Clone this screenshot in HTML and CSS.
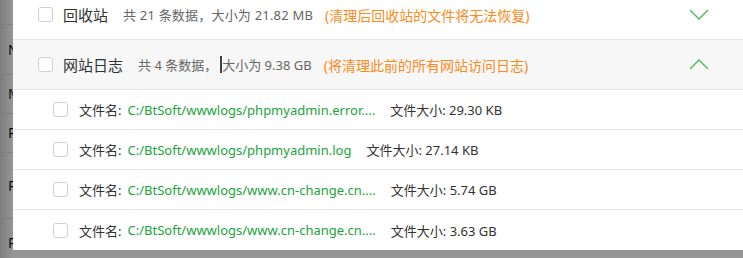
FILE: index.html
```html
<!DOCTYPE html>
<html lang="zh-CN">
<head>
<meta charset="utf-8">
<title>清理</title>
<link rel="stylesheet" href="styles.css">
</head>
<body>
<div class="backdrop">
  <div class="under">
    <div class="urow r1"></div>
    <div class="urow r2"><span>N</span></div>
    <div class="urow r3"><span>M</span></div>
    <div class="urow r4"><span>P</span></div>
    <div class="urow r5"><span>P</span></div>
    <div class="urow r6"><span>P</span></div>
  </div>
  <div class="shade"></div>
  <div class="yellow"></div>

  <div class="modal">
    <div class="group">
      <span class="cb"></span>
      <span class="gname">回收站</span>
      <span class="ginfo wide">共 21 条数据，大小为 21.82 MB</span>
      <span class="gwarn">(清理后回收站的文件将无法恢复)</span>
      <svg class="chev" width="20" height="11" viewBox="0 0 20 11"><path d="M1 1 L10 10 L19 1" fill="none" stroke="#4cb55a" stroke-width="1.3"/></svg>
    </div>
    <div class="group open">
      <span class="cb"></span>
      <span class="gname">网站日志</span>
      <span class="ginfo">共 4 条数据，<span class="caret"></span>大小为 9.38 GB</span>
      <span class="gwarn">(将清理此前的所有网站访问日志)</span>
      <svg class="chev" width="20" height="11" viewBox="0 0 20 11"><path d="M1 10 L10 1 L19 10" fill="none" stroke="#4cb55a" stroke-width="1.3"/></svg>
    </div>
    <div class="item">
      <span class="cb sm"></span>
      <span class="lbl">文件名:</span>
      <span class="path">C:/BtSoft/wwwlogs/phpmyadmin.error....</span>
      <span class="size">文件大小: 29.30 KB</span>
    </div>
    <div class="item">
      <span class="cb sm"></span>
      <span class="lbl">文件名:</span>
      <span class="path">C:/BtSoft/wwwlogs/phpmyadmin.log</span>
      <span class="size">文件大小: 27.14 KB</span>
    </div>
    <div class="item">
      <span class="cb sm"></span>
      <span class="lbl">文件名:</span>
      <span class="path">C:/BtSoft/wwwlogs/www.cn-change.cn....</span>
      <span class="size">文件大小: 5.74 GB</span>
    </div>
    <div class="item last">
      <span class="cb sm"></span>
      <span class="lbl">文件名:</span>
      <span class="path">C:/BtSoft/wwwlogs/www.cn-change.cn....</span>
      <span class="size">文件大小: 3.63 GB</span>
    </div>
  </div>
</div>
</body>
</html>
```
FILE: styles.css
```css
* { box-sizing: border-box; }
html, body { margin: 0; padding: 0; }
body {
  width: 743px;
  height: 258px;
  overflow: hidden;
  font-family: "Noto Sans", "Noto Sans CJK SC", sans-serif;
  background: #fff;
}
.backdrop {
  position: relative;
  width: 743px;
  height: 258px;
  overflow: hidden;
}
.under {
  display: flex;
  flex-direction: column;
  height: 258px;
  background: linear-gradient(to right, #d0d0d0 0, #fafafa 13px, #fafafa 100%);
}
.urow {
  border-bottom: 1px solid #d4d4d4;
  font-size: 14px;
  color: #1a1a1a;
  display: flex;
  align-items: center;
  padding-left: 8px;
}
.r1 { height: 26px; }
.r2 { height: 51px; }
.r3 { height: 40px; }
.r4 { height: 40px; }
.r5 { height: 68px; }
.r6 { height: 40px; border-bottom: 0; padding-top: 8px; }
.shade {
  position: absolute;
  inset: 0;
  background: rgba(0, 0, 0, 0.4);
}
.yellow {
  position: absolute;
  left: 710px;
  top: 248px;
  width: 13px;
  height: 2px;
  background: #a08a30;
}
.modal {
  position: absolute;
  left: 13px;
  top: -10px;
  width: 730px;
  background: #fff;
}
.group {
  height: 50px;
  display: flex;
  align-items: center;
  padding-left: 25px;
  padding-right: 34px;
  border-bottom: 1px solid #e6e6e6;
  background: #fff;
}
.group.open { background: #f7f7f7; }
.cb {
  width: 15px;
  height: 15px;
  border: 1px solid #cfcfcf;
  border-radius: 3px;
  background: #fff;
  flex: none;
}
.gname {
  margin-left: 10px;
  font-size: 15px;
  color: #333;
}
.ginfo {
  margin-left: 15px;
  font-size: 13px;
  color: #666;
  display: flex;
  align-items: center;
}
.ginfo.wide { letter-spacing: 0.2px; }
.caret {
  display: inline-block;
  width: 2px;
  height: 17px;
  background: #444;
  margin: 0 0 0 3px;
}
.gwarn {
  margin-left: 12px;
  font-size: 14px;
  color: #fc8a1c;
}
.chev {
  margin-left: auto;
  flex: none;
}
.item {
  height: 40px;
  display: flex;
  align-items: center;
  padding-left: 40px;
  border-bottom: 1px solid #e8e8e8;
  font-size: 13px;
}
.item.last { border-bottom: 0; }
.lbl {
  margin-left: 11px;
  color: #333;
}
.path {
  margin-left: 6px;
  color: #20a53a;
}
.size {
  margin-left: 15px;
  color: #333;
}
```
